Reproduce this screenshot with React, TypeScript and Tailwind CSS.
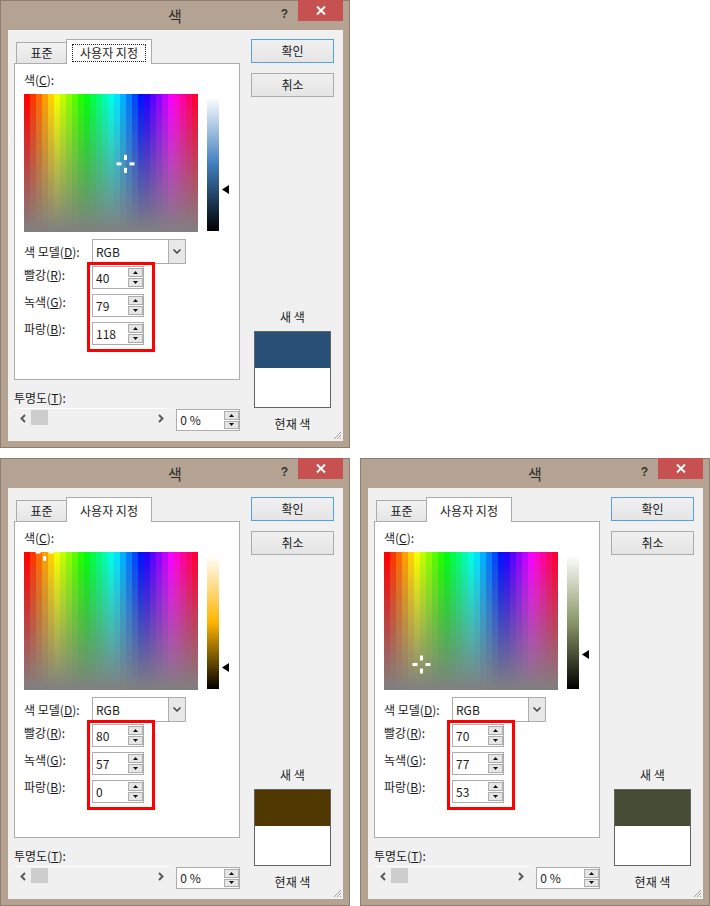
import React from "react";

type HSL = { h: number; s: number; l: number };

function rgbToHsl(r0: number, g0: number, b0: number): HSL {
  const r = r0 / 255, g = g0 / 255, b = b0 / 255;
  const max = Math.max(r, g, b), min = Math.min(r, g, b);
  const l = (max + min) / 2;
  const d = max - min;
  let h = 0, s = 0;
  if (d) {
    s = l > 0.5 ? d / (2 - max - min) : d / (max + min);
    if (max === r) h = (g - b) / d + (g < b ? 6 : 0);
    else if (max === g) h = (b - r) / d + 2;
    else h = (r - g) / d + 4;
    h *= 60;
  }
  return { h, s, l };
}

const COLS = Array.from({ length: 29 }, (_, i) => i);

function Spectrum({ id, cx, cy }: { id: string; cx: number; cy: number }) {
  return (
    <div className="relative w-[174px] h-[138px] overflow-hidden shrink-0">
      <svg width="174" height="138" className="block">
        <defs>
          {COLS.map((i) => (
            <linearGradient key={i} id={`${id}-c${i}`} x1="0" y1="0" x2="0" y2="1">
              <stop offset="0" stopColor={`hsl(${(i * 360) / 29}, 100%, 50%)`} />
              <stop offset="1" stopColor="#808080" />
            </linearGradient>
          ))}
        </defs>
        {COLS.map((i) => (
          <rect key={i} x={i * 6} y={0} width={6} height={138} fill={`url(#${id}-c${i})`} />
        ))}
        <g fill="#ffffff">
          <rect x={cx - 9} y={cy - 1.5} width={5} height={3} />
          <rect x={cx + 4} y={cy - 1.5} width={5} height={3} />
          <rect x={cx - 1.5} y={cy - 9} width={3} height={5} />
          <rect x={cx - 1.5} y={cy + 4} width={3} height={5} />
        </g>
      </svg>
    </div>
  );
}

function Tri({ up }: { up: boolean }) {
  return (
    <svg width="5" height="3" viewBox="0 0 5 3" className="block">
      <polygon points={up ? "0,3 2.5,0 5,3" : "0,0 2.5,3 5,0"} fill="#111" />
    </svg>
  );
}

function SpinButtons() {
  return (
    <div className="w-[15px] h-full flex flex-col gap-px py-px">
      <div className="flex-1 border border-[#adadad] bg-[#e6e6e6] flex items-center justify-center">
        <Tri up />
      </div>
      <div className="flex-1 border border-[#adadad] bg-[#e6e6e6] flex items-center justify-center">
        <Tri up={false} />
      </div>
    </div>
  );
}

function SpinBox({ value }: { value: string }) {
  return (
    <div className="w-[52px] h-[23px] bg-white border border-[#adadad] flex items-stretch">
      <div className="flex-1 pl-[3px] flex items-center">{value}</div>
      <SpinButtons />
    </div>
  );
}

function Chevron({ left }: { left: boolean }) {
  return (
    <svg width="6" height="9" viewBox="0 0 6 9" className="block">
      <polyline
        points={left ? "5,1 1.5,4.5 5,8" : "1,1 4.5,4.5 1,8"}
        fill="none"
        stroke="#5a5a5a"
        strokeWidth="2"
      />
    </svg>
  );
}

function Dialog({ id, r, g, b, focus }: { id: string; r: number; g: number; b: number; focus: boolean }) {
  const { h, s, l } = rgbToHsl(r, g, b);
  const cx = (h / 360) * 174;
  const cy = (1 - s) * 138;
  const arrowTop = 3 + (1 - l) * 134 - 4.5;
  const hue = `hsl(${h}, ${s * 100}%, 50%)`;

  return (
    <div className="w-[350px] h-[448px] border border-[#8d7d6d] bg-[#b4a392] flex flex-col font-['Noto_Sans_CJK_KR','Noto_Sans',sans-serif] text-[12px] leading-[16px] text-[#1a1a1a]">
      {/* title bar */}
      <div className="relative h-[29px] flex items-center justify-center">
        <span className="text-[15px] leading-[20px] text-[#2b2b2b]">색</span>
        <div className="absolute right-[6px] top-[-1px] flex items-start">
          <span className="mt-[7px] mr-[10px] text-[12px] leading-[14px] font-bold text-[#333] font-['Liberation_Sans',sans-serif]">
            ?
          </span>
          <div className="w-[45px] h-[21px] bg-[#c75050] flex items-center justify-center">
            <svg width="10" height="9" viewBox="0 0 10 9" className="block">
              <path d="M1 0.5 L9 8.5 M9 0.5 L1 8.5" stroke="#ffffff" strokeWidth="2" />
            </svg>
          </div>
        </div>
      </div>

      {/* client */}
      <div className="relative ml-[7px] w-[335px] h-[411px] bg-[#f0f0f0] flex">
        {/* left column */}
        <div className="ml-[6px] w-[226px] flex flex-col">
          <div className="mt-[9px] h-[24px] flex items-end">
            <div className="ml-[2px] w-[51px] h-[21px] border border-b-0 border-[#acacac] bg-gradient-to-b from-[#f2f2f2] to-[#e5e5e5] flex items-center justify-center">
              표준
            </div>
            <div className="-ml-px -mb-px relative z-10 w-[86px] h-[25px] bg-white border border-b-0 border-[#acacac] pt-[4px] pl-[5px]">
              <div
                className={
                  focus
                    ? "w-[74px] h-[18px] flex items-center justify-center border border-dotted border-[#222]"
                    : "w-[74px] h-[18px] flex items-center justify-center border border-transparent"
                }
              >
                사용자 지정
              </div>
            </div>
          </div>

          {/* tab panel */}
          <div className="relative w-[226px] h-[317px] bg-white border border-[#acacac] pl-[9px] pt-[8px]">
            <div>
              색(<u>C</u>):
            </div>
            <div className="mt-[6px] flex items-start">
              <Spectrum id={id} cx={cx} cy={cy} />
              <div className="ml-[9px] w-[12px] h-[138px] pt-[3px]">
                <svg width="12" height="134" className="block">
                  <defs>
                    <linearGradient id={`${id}-lum`} x1="0" y1="0" x2="0" y2="1">
                      <stop offset="0" stopColor="#ffffff" />
                      <stop offset="0.5" stopColor={hue} />
                      <stop offset="1" stopColor="#000000" />
                    </linearGradient>
                  </defs>
                  <rect x="0" y="0" width="12" height="134" fill={`url(#${id}-lum)`} />
                </svg>
              </div>
              <div className="relative ml-[3px] w-[8px] h-[138px]">
                <svg width="7" height="9" viewBox="0 0 7 9" className="absolute left-0" style={{ top: arrowTop }}>
                  <polygon points="0,4.5 7,0 7,9" fill="#000" />
                </svg>
              </div>
            </div>

            <div className="mt-[7px] flex items-center">
              <div className="w-[68px]">
                색 모델(<u>D</u>):
              </div>
              <div className="w-[94px] h-[25px] bg-white border border-[#adadad] flex items-stretch">
                <div className="flex-1 pl-[3px] flex items-center">RGB</div>
                <div className="w-[17px] border-l border-[#adadad] bg-[#e8e8e8] flex items-center justify-center">
                  <svg width="8" height="5" viewBox="0 0 8 5" className="block">
                    <polyline points="0.5,0.5 4,4 7.5,0.5" fill="none" stroke="#444" strokeWidth="1.5" />
                  </svg>
                </div>
              </div>
            </div>

            <div className="mt-[2px] flex items-start">
              <div className="w-[68px] mt-px">
                빨강(<u>R</u>):
              </div>
              <SpinBox value={String(r)} />
            </div>
            <div className="mt-[5px] flex items-start">
              <div className="w-[68px]">
                녹색(<u>G</u>):
              </div>
              <SpinBox value={String(g)} />
            </div>
            <div className="mt-[5px] flex items-start">
              <div className="w-[68px] -mt-px">
                파랑(<u>B</u>):
              </div>
              <SpinBox value={String(b)} />
            </div>

            {/* annotation box */}
            <div className="absolute left-[72px] top-[198px] w-[68px] h-[90px] border-[3px] border-[#ff0000]" />
          </div>

          <div className="mt-[10px]">
            투명도(<u>T</u>):
          </div>
          <div className="mt-[2px] flex items-start">
            <div className="w-[156px] h-[22px] border-t border-white flex items-start">
              <div className="w-[17px] h-[18px] flex items-center justify-center">
                <Chevron left />
              </div>
              <div className="mt-px w-[17px] h-[15px] bg-[#cdcdcd]" />
              <div className="flex-1" />
              <div className="w-[17px] h-[18px] flex items-center justify-center">
                <Chevron left={false} />
              </div>
            </div>
            <div className="ml-[7px] mt-px w-[64px] h-[22px] bg-white border border-[#adadad] flex items-stretch">
              <div className="flex-1 pl-[3px] flex items-center">0 %</div>
              <SpinButtons />
            </div>
          </div>
        </div>

        {/* right column */}
        <div className="ml-[11px] w-[83px] flex flex-col">
          <div className="mt-[9px] h-[24px] border border-[#56a0e8] bg-gradient-to-b from-[#f0f0f0] to-[#e5e5e5] flex items-center justify-center">
            확인
          </div>
          <div className="mt-[10px] h-[24px] border border-[#acacac] bg-gradient-to-b from-[#f0f0f0] to-[#e5e5e5] flex items-center justify-center">
            취소
          </div>
          <div className="mt-[212px] text-center">새 색</div>
          <div className="mt-[6px] mx-[3px] h-[77px] border border-[#646464] flex flex-col">
            <div className="h-[36px]" style={{ backgroundColor: `rgb(${r}, ${g}, ${b})` }} />
            <div className="flex-1 bg-white" />
          </div>
          <div className="mt-[8px] text-center">현재 색</div>
        </div>

        {/* resize grip */}
        <div className="absolute right-[1px] bottom-[1px]">
          <svg width="10" height="10" viewBox="0 0 10 10" className="block">
            <path d="M9 2 L2 9 M9 5 L5 9 M9 8 L8 9" stroke="#a0a0a0" strokeWidth="1" />
          </svg>
        </div>
      </div>
    </div>
  );
}

export default function App() {
  return (
    <div className="w-[710px] h-[906px] bg-white flex flex-col gap-[10px]">
      <Dialog id="d1" r={40} g={79} b={118} focus />
      <div className="flex gap-[10px]">
        <Dialog id="d2" r={80} g={57} b={0} focus={false} />
        <Dialog id="d3" r={70} g={77} b={53} focus={false} />
      </div>
    </div>
  );
}
